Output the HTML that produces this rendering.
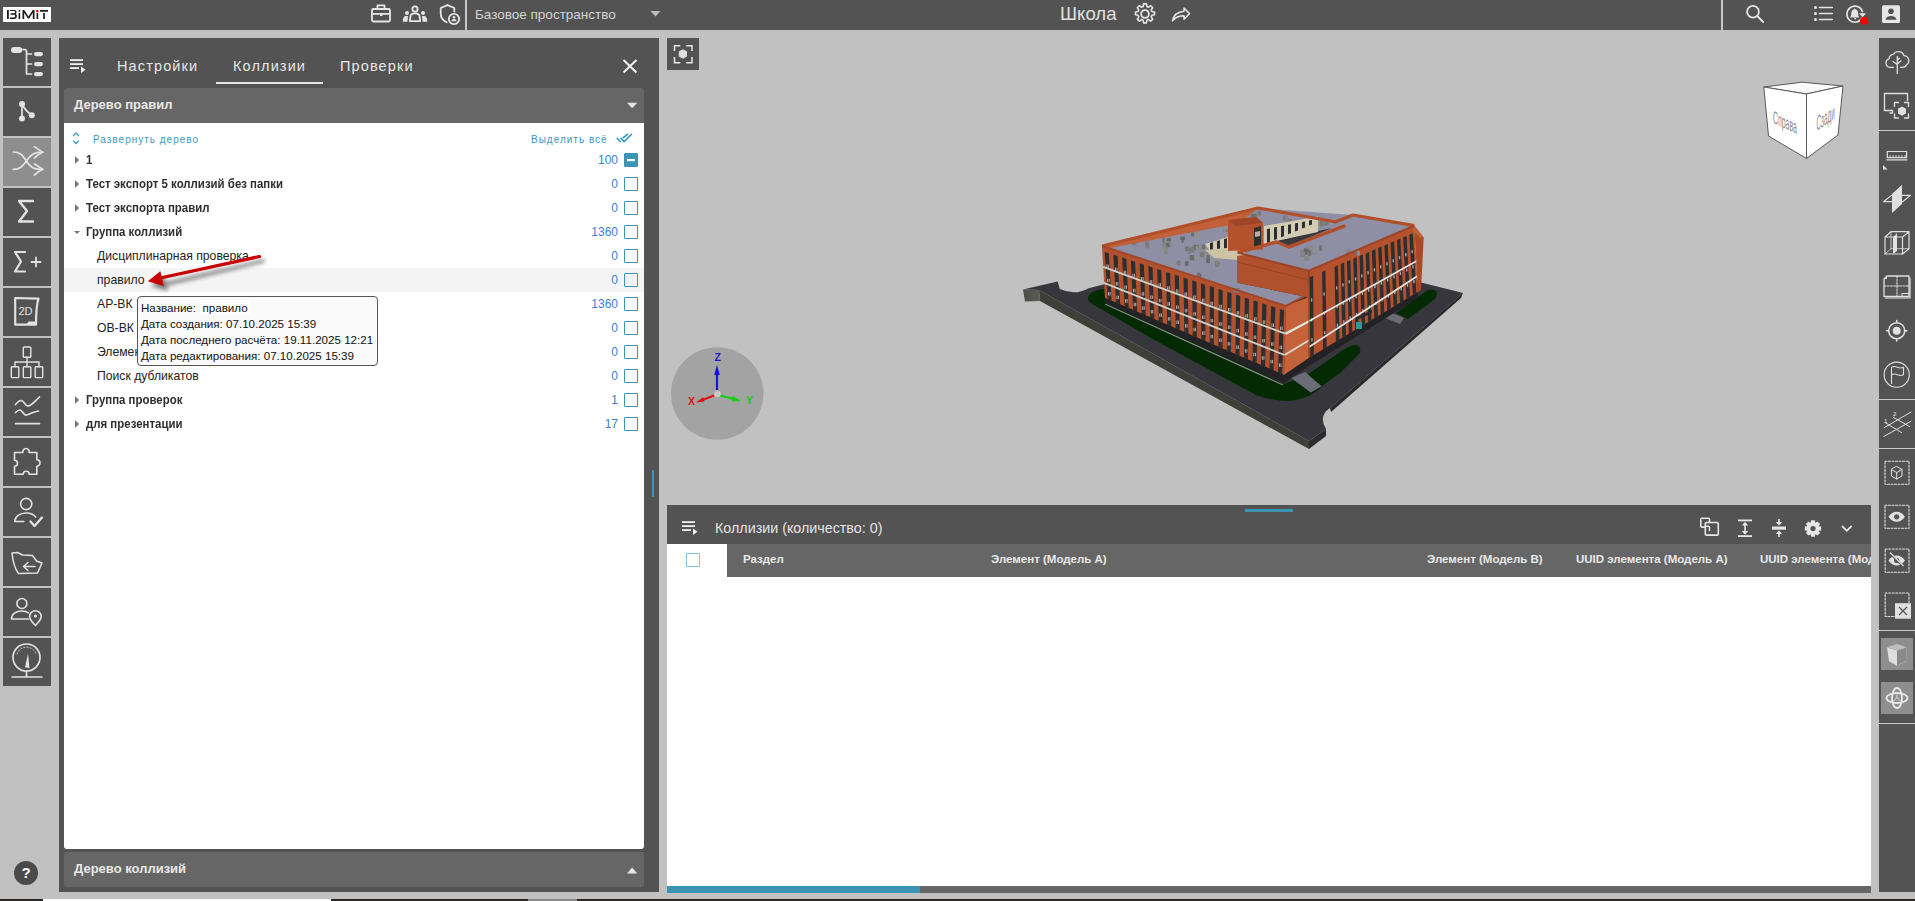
<!DOCTYPE html>
<html><head><meta charset="utf-8">
<style>
*{box-sizing:border-box;margin:0;padding:0}
html,body{width:1915px;height:901px;overflow:hidden;background:#c1c1c1;font-family:"Liberation Sans",sans-serif;position:relative}
.a{position:absolute}
.dk{background:#535353}
svg{position:absolute;overflow:visible}
.tile{position:absolute;left:3px;width:48px;height:48px;background:#535353}
.tile.on{background:#8e8e8e}
.row{position:absolute;left:64px;width:580px;height:24px;font-size:12px;color:#222}
.row .t{position:absolute;top:5px;white-space:nowrap}
.row .n{position:absolute;right:26px;top:5px;color:#3b7fd6;font-size:12px}
.row .cb{position:absolute;left:560px;top:5px;width:14px;height:14px;border:1.5px solid #3d93b3;border-radius:1px}
.b{font-weight:bold}
.row .t{font-size:12.2px}
.row .t.b{font-size:12.3px;color:#2e2e2e;top:4.5px;transform:scaleX(0.93);transform-origin:0 0}
.tri{position:absolute;left:11px;top:8px;width:0;height:0;border-top:4px solid transparent;border-bottom:4px solid transparent;border-left:4px solid #777}
.trid{position:absolute;left:10px;top:10.5px;width:0;height:0;border-left:3.5px solid transparent;border-right:3.5px solid transparent;border-top:3.5px solid #777}
.rt{position:absolute;left:1879px;width:36px}
.sep{position:absolute;left:1879px;width:36px;height:1px;background:#c8c8c8}
</style></head><body>

<!-- TOP BAR -->
<div class="a dk" style="left:0;top:0;width:1915px;height:30px"></div>
<div class="a" style="left:3px;top:7px;width:48px;height:15px;background:#fff"></div>
<div class="a" style="left:465px;top:0;width:2px;height:30px;background:#c8c8c8"></div>
<div class="a" style="left:475px;top:7px;font-size:13.5px;color:#d4d4d4;white-space:nowrap">Базовое пространство</div>
<div class="a" style="left:1721px;top:0;width:2px;height:30px;background:#c8c8c8"></div>
<div class="a" style="left:1060px;top:3px;font-size:18.6px;color:#e0e0e0;white-space:nowrap">Школа</div>

<!-- LEFT SIDEBAR TILES -->
<div class="tile" style="top:38px"></div>
<div class="tile" style="top:88px"></div>
<div class="tile on" style="top:138px"></div>
<div class="tile" style="top:188px"></div>
<div class="tile" style="top:238px"></div>
<div class="tile" style="top:288px"></div>
<div class="tile" style="top:338px"></div>
<div class="tile" style="top:388px"></div>
<div class="tile" style="top:438px"></div>
<div class="tile" style="top:488px"></div>
<div class="tile" style="top:538px"></div>
<div class="tile" style="top:588px"></div>
<div class="tile" style="top:638px"></div>
<div class="a" style="left:14px;top:861px;width:24px;height:24px;border-radius:12px;background:#4a4a4a;color:#fff;font-weight:bold;font-size:15px;text-align:center;line-height:24px">?</div>

<!-- LEFT PANEL -->
<div class="a dk" style="left:59px;top:38px;width:600px;height:854px"></div>
<div class="a" style="left:117px;top:58px;font-size:14.5px;color:#e6e6e6;letter-spacing:1.13px;white-space:nowrap">Настройки</div>
<div class="a" style="left:233px;top:58px;font-size:14.5px;color:#e6e6e6;letter-spacing:1.13px;white-space:nowrap">Коллизии</div>
<div class="a" style="left:340px;top:58px;font-size:14.5px;color:#e6e6e6;letter-spacing:1.13px;white-space:nowrap">Проверки</div>
<div class="a" style="left:216px;top:82px;width:107px;height:2px;background:#e6e6e6"></div>
<div class="a" style="left:64px;top:88px;width:580px;height:35px;background:#666;border-radius:3px 3px 0 0"></div>
<div class="a b" style="left:74px;top:97px;font-size:13px;color:#e8e8e8;white-space:nowrap">Дерево правил</div>
<div class="a" style="left:64px;top:123px;width:580px;height:726px;background:#fff;border-radius:0 0 3px 3px"></div>
<div class="a" style="left:64px;top:852px;width:580px;height:35px;background:#666;border-radius:3px"></div>
<div class="a b" style="left:74px;top:861px;font-size:13px;color:#e8e8e8;white-space:nowrap">Дерево коллизий</div>

<div class="a" style="left:93px;top:133.5px;font-size:10px;color:#3e98c0;letter-spacing:1px;white-space:nowrap">Развернуть дерево</div>
<div class="a" style="left:531px;top:133.5px;font-size:10px;color:#3e98c0;letter-spacing:1px;white-space:nowrap">Выделить всё</div>

<div class="row" style="top:148px"><div class="tri"></div><div class="t b" style="left:22px">1</div><div class="n">100</div><div class="cb" style="background:#3d93b3"></div></div>
<div class="row" style="top:172px"><div class="tri"></div><div class="t b" style="left:22px">Тест экспорт 5 коллизий без папки</div><div class="n">0</div><div class="cb"></div></div>
<div class="row" style="top:196px"><div class="tri"></div><div class="t b" style="left:22px">Тест экспорта правил</div><div class="n">0</div><div class="cb"></div></div>
<div class="row" style="top:220px"><div class="trid"></div><div class="t b" style="left:22px">Группа коллизий</div><div class="n">1360</div><div class="cb"></div></div>
<div class="row" style="top:244px"><div class="t" style="left:33px">Дисциплинарная проверка</div><div class="n">0</div><div class="cb"></div></div>
<div class="row" style="top:268px;background:#f4f4f4"><div class="t" style="left:33px">правило</div><div class="n">0</div><div class="cb"></div></div>
<div class="row" style="top:292px"><div class="t" style="left:33px">АР-ВК</div><div class="n">1360</div><div class="cb"></div></div>
<div class="row" style="top:316px"><div class="t" style="left:33px">ОВ-ВК</div><div class="n">0</div><div class="cb"></div></div>
<div class="row" style="top:340px"><div class="t" style="left:33px">Элементы</div><div class="n">0</div><div class="cb"></div></div>
<div class="row" style="top:364px"><div class="t" style="left:33px">Поиск дубликатов</div><div class="n">0</div><div class="cb"></div></div>
<div class="row" style="top:388px"><div class="tri"></div><div class="t b" style="left:22px">Группа проверок</div><div class="n">1</div><div class="cb"></div></div>
<div class="row" style="top:412px"><div class="tri"></div><div class="t b" style="left:22px">для презентации</div><div class="n">17</div><div class="cb"></div></div>

<!-- tooltip -->
<div class="a" style="left:137px;top:296px;width:241px;height:70px;background:#fafafa;border:1px solid #555;border-radius:4px;font-size:11.6px;color:#111;padding:3px 0 0 3px;line-height:16px;white-space:nowrap">Название:&nbsp; <span style="background:#fff;padding:0 2px;margin-left:-2px">правило</span><br>Дата создания: 07.10.2025 15:39<br>Дата последнего расчёта: 19.11.2025 12:21<br>Дата редактирования: 07.10.2025 15:39</div>

<!-- VIEWER -->
<div class="a dk" style="left:667px;top:38px;width:32px;height:32px"></div>

<!-- BOTTOM PANEL -->
<div class="a dk" style="left:667px;top:505px;width:1204px;height:39px"></div>
<div class="a" style="left:715px;top:520px;font-size:14.3px;color:#e4e4e4;white-space:nowrap">Коллизии (количество: 0)</div>
<div class="a" style="left:667px;top:544px;width:1204px;height:342px;background:#fff"></div>
<div class="a" style="left:727px;top:544px;width:1144px;height:33px;background:#666"></div>
<div class="a" style="left:686px;top:553px;width:14px;height:14px;border:1.5px solid #7fc0da;border-radius:1px"></div>
<div class="a b" style="left:743px;top:553px;font-size:11.5px;color:#e8e8e8;white-space:nowrap">Раздел</div>
<div class="a b" style="left:991px;top:553px;font-size:11.5px;color:#e8e8e8;white-space:nowrap">Элемент (Модель А)</div>
<div class="a b" style="left:1427px;top:553px;font-size:11.5px;color:#e8e8e8;white-space:nowrap">Элемент (Модель В)</div>
<div class="a b" style="left:1576px;top:553px;font-size:11.5px;color:#e8e8e8;white-space:nowrap">UUID элемента (Модель А)</div>
<div class="a" style="left:1760px;top:544px;width:111px;height:33px;overflow:hidden"><div class="a b" style="left:0;top:9px;font-size:11.5px;color:#e8e8e8;white-space:nowrap">UUID элемента (Модель В)</div></div>
<div class="a" style="left:667px;top:886px;width:1204px;height:7px;background:#666"></div>
<div class="a" style="left:667px;top:886px;width:253px;height:7px;background:#3a93b0"></div>

<!-- RIGHT TOOLBAR -->
<div class="a dk" style="left:1879px;top:38px;width:36px;height:854px"></div>
<div class="sep" style="top:130px"></div>
<div class="sep" style="top:399px"></div>
<div class="sep" style="top:448px"></div>
<div class="sep" style="top:630px"></div>
<div class="sep" style="top:723px"></div>
<div class="a" style="left:1881px;top:638px;width:32px;height:32px;background:#8e8e8e"></div>
<div class="a" style="left:1881px;top:682px;width:32px;height:32px;background:#8e8e8e"></div>


<!-- ICON OVERLAY -->
<svg class="a" style="left:0;top:0" width="1915" height="901" viewBox="0 0 1915 901">
<g id="logo">
 <g fill="#1a1a1a">
  <rect x="7" y="10" width="1.8" height="9"/>
  <path d="M10 10h4.2c1.6 0 2.4 0.9 2.4 2.2c0 0.8-0.4 1.5-1.1 1.8c0.9 0.3 1.4 1 1.4 2c0 1.6-1 3-2.7 3H10v-1.6h4c0.8 0 1.2-0.6 1.2-1.3c0-0.7-0.4-1.3-1.2-1.3H10.6v-1.5h3.4c0.7 0 1.1-0.5 1.1-1.1c0-0.6-0.4-1.1-1.1-1.1H10z"/>
  <rect x="18.6" y="10" width="1.6" height="1.6"/>
  <rect x="18.6" y="13" width="1.6" height="6"/>
  <path d="M22.5 10h1.8l4.2 6.5l4.2-6.5h1.8v9h-1.7v-6.2l-3.7 5.6h-1.2l-3.7-5.6v6.2h-1.7z"/>
  <rect x="36.6" y="13" width="1.6" height="6"/>
  <rect x="40" y="10" width="8" height="1.7"/>
  <rect x="43.2" y="13" width="1.7" height="6"/>
 </g>
 <rect x="36.2" y="10" width="2.2" height="2.2" fill="#f00"/>
</g>
<g fill="none" stroke="#e6e6e6" stroke-width="1.8" stroke-linecap="round" stroke-linejoin="round">
 <!-- briefcase -->
 <rect x="372" y="9" width="18" height="12.5" rx="1.5"/>
 <path d="M377.5 8.5v-3.2h7v3.2"/>
 <path d="M372 13.8h18"/>
 <rect x="380" y="13.8" width="2.5" height="2.2" fill="#e6e6e6" stroke="none"/>
 <!-- people -->
 <circle cx="415" cy="9" r="2.6"/>
 <path d="M409.8 21.2l0.8-5.5c0.3-1.6 1.8-2.4 4.4-2.4s4.1 0.8 4.4 2.4l0.8 5.5z"/>
 <!-- shield -->
 <path d="M447.5 5.2l-6.8 2.8v5.5c0 4 2.4 7.2 6 8.8"/>
 <path d="M447.5 5.2l6.8 2.8v3.6"/>
 <circle cx="454" cy="19" r="5.2"/>
 <!-- gear -->
 <circle cx="1145" cy="14" r="3.9"/>
 <!-- share -->
 <path d="M1184 8l5.5 5.6l-5.5 5.6v-3.4c-5 0-8.5 1.4-11.5 5c1-5 4-8.8 11.5-9.5z" stroke-width="1.5"/>
 <!-- search -->
 <circle cx="1753" cy="11.7" r="5.9"/>
 <path d="M1757.3 16l5.8 6"/>
 <!-- list -->
 <path d="M1819.5 7.5h12.8M1819.5 13.5h12.8M1819.5 19.5h12.8" stroke-width="1.5"/>
 <!-- bell ring -->
 <path d="M1862.5 11.5a8 8 0 1 0 -0.5 6.5" stroke-width="1.6"/>
</g>
<g fill="#e6e6e6">
 <circle cx="407" cy="13" r="2"/>
 <circle cx="423" cy="13" r="2"/>
 <path d="M402.8 21.8c0-3.5 0.8-5.5 2.8-5.9h2.4l-0.6 5.9z"/>
 <path d="M427.2 21.8c0-3.5-0.8-5.5-2.8-5.9h-2.4l0.6 5.9z"/>
 <circle cx="454" cy="17.2" r="1.3"/>
 <path d="M451.3 21.2c0.3-1.6 1.3-2.3 2.7-2.3s2.4 0.7 2.7 2.3z"/>
 <path d="M1143.6 3.9h2.8l0.5 2.6l1.6 0.7l2.2-1.5l2 2l-1.5 2.2l0.7 1.6l2.6 0.5v2.8l-2.6 0.5l-0.7 1.6l1.5 2.2l-2 2l-2.2-1.5l-1.6 0.7l-0.5 2.6h-2.8l-0.5-2.6l-1.6-0.7l-2.2 1.5l-2-2l1.5-2.2l-0.7-1.6l-2.6-0.5v-2.8l2.6-0.5l0.7-1.6l-1.5-2.2l2-2l2.2 1.5l1.6-0.7z" fill="none" stroke="#e6e6e6" stroke-width="1.6" stroke-linejoin="round"/>
 <circle cx="1815.5" cy="7.5" r="1.5"/><circle cx="1815.5" cy="13.5" r="1.5"/><circle cx="1815.5" cy="19.5" r="1.5"/>
 <path d="M1859 13.2h7l-3.5 4z"/>
 <path d="M1851 17.5h8.5c-1-1-1.3-2-1.3-3.6c0-2.3-1-4.2-3-4.6v-0.8h-1v0.8c-2 0.4-3 2.3-3 4.6c0 1.6-0.3 2.6-1.3 3.6z"/>
 <circle cx="1855.2" cy="18.6" r="0.9"/>
 <rect x="1882" y="5.2" width="18" height="17.8" rx="1.5"/>
</g>
<circle cx="1864" cy="20.7" r="4" fill="#f00"/>

<!-- BUILDING -->
<g id="bld"><path d="M1023,289.5 L1057.6,281.5 L1059.8,289.1 Q1075,296 1088.7,288.2 L1106.4,283.8 L1260,240 L1423,283 L1463,293 L1330,408 Q1318,416 1326,429 L1309,441 L1039,290 Z" fill="#37363c"/>
<defs><linearGradient id="endg" x1="0" x2="1" y1="0" y2="0"><stop offset="0" stop-color="#4a4a4a"/><stop offset="1" stop-color="#5e5e58"/></linearGradient></defs>
<polygon points="1023.0,289.5 1039.0,290.0 1040.0,301.0 1025.0,301.5" fill="url(#endg)" />
<polygon points="1039.0,290.0 1309.0,441.0 1309.0,449.0 1040.0,301.0" fill="#3f3f3a" />
<polygon points="1326.0,429.0 1326.0,436.0 1309.0,449.0 1309.0,441.0" fill="#2c2c2e" />
<polygon points="1463.0,293.0 1461.0,298.0 1331.0,412.0 1330.0,408.0" fill="#2a2a2c" />
<path d="M1106,289 L1283,384 L1306,376 L1322,386 Q1312,398 1290,401 Q1272,401 1256,395 L1150,337.5 L1095,305.5 Q1084,300 1090,294 Q1096,289 1106,289 Z" fill="#032a03"/>
<path d="M1306,375.5 L1346,348 Q1362,340 1360,353 L1340,373 L1322,386 Z" fill="#032a03"/>
<path d="M1396,313 L1428,290 Q1441,288 1435,299 L1408,319 Z" fill="#032a03"/>
<polygon points="1291.0,378.0 1305.0,372.0 1321.5,386.2 1310.8,392.4" fill="#6c6c78" />
<polygon points="1385.0,318.0 1400.0,324.0 1404.0,318.0 1392.0,313.0" fill="#6c6c74" />
<line x1="1105" y1="304" x2="1283" y2="385" stroke="#8a8a8a" stroke-width="1.2"/>
<polygon points="1102.0,246.0 1286.0,306.0 1284.0,375.0 1105.0,298.0" fill="#b3512e" />
<polygon points="1105.0,298.0 1284.0,375.0 1284.0,383.0 1105.0,303.0" fill="#232325" />
<polygon points="1104.6,251.9 1108.8,253.2 1111.6,300.9 1107.6,299.1" fill="#2c2e30" />
<rect x="1106.3" y="264.6" width="2.5" height="3.4" fill="#b9b2b4"/>
<rect x="1107.3" y="264.6" width="0.6" height="3.4" fill="#2c2e30"/>
<rect x="1107.2" y="278.8" width="2.5" height="3.4" fill="#b9b2b4"/>
<rect x="1108.2" y="278.8" width="0.6" height="3.4" fill="#2c2e30"/>
<rect x="1108.0" y="292.1" width="2.5" height="3.4" fill="#b9b2b4"/>
<rect x="1109.0" y="292.1" width="0.6" height="3.4" fill="#2c2e30"/>
<polygon points="1113.4,254.7 1117.6,256.1 1120.2,304.5 1116.1,302.8" fill="#2c2e30" />
<rect x="1115.0" y="267.7" width="2.5" height="3.4" fill="#b9b2b4"/>
<rect x="1116.0" y="267.7" width="0.6" height="3.4" fill="#2c2e30"/>
<rect x="1115.8" y="282.1" width="2.5" height="3.4" fill="#b9b2b4"/>
<rect x="1116.8" y="282.1" width="0.6" height="3.4" fill="#2c2e30"/>
<rect x="1116.5" y="295.7" width="2.5" height="3.4" fill="#b9b2b4"/>
<rect x="1117.5" y="295.7" width="0.6" height="3.4" fill="#2c2e30"/>
<polygon points="1122.2,257.6 1126.4,258.9 1128.7,308.2 1124.6,306.4" fill="#2c2e30" />
<rect x="1123.7" y="270.8" width="2.5" height="3.4" fill="#b9b2b4"/>
<rect x="1124.7" y="270.8" width="0.6" height="3.4" fill="#2c2e30"/>
<rect x="1124.4" y="285.5" width="2.5" height="3.4" fill="#b9b2b4"/>
<rect x="1125.4" y="285.5" width="0.6" height="3.4" fill="#2c2e30"/>
<rect x="1125.1" y="299.2" width="2.5" height="3.4" fill="#b9b2b4"/>
<rect x="1126.1" y="299.2" width="0.6" height="3.4" fill="#2c2e30"/>
<polygon points="1130.9,260.4 1135.1,261.8 1137.2,311.9 1133.1,310.1" fill="#2c2e30" />
<rect x="1132.4" y="273.9" width="2.5" height="3.4" fill="#b9b2b4"/>
<rect x="1133.4" y="273.9" width="0.6" height="3.4" fill="#2c2e30"/>
<rect x="1133.0" y="288.8" width="2.5" height="3.4" fill="#b9b2b4"/>
<rect x="1134.0" y="288.8" width="0.6" height="3.4" fill="#2c2e30"/>
<rect x="1133.7" y="302.8" width="2.5" height="3.4" fill="#b9b2b4"/>
<rect x="1134.6" y="302.8" width="0.6" height="3.4" fill="#2c2e30"/>
<polygon points="1139.7,263.3 1143.9,264.7 1145.7,315.5 1141.7,313.8" fill="#2c2e30" />
<rect x="1141.1" y="277.0" width="2.5" height="3.4" fill="#b9b2b4"/>
<rect x="1142.1" y="277.0" width="0.6" height="3.4" fill="#2c2e30"/>
<rect x="1141.7" y="292.2" width="2.5" height="3.4" fill="#b9b2b4"/>
<rect x="1142.6" y="292.2" width="0.6" height="3.4" fill="#2c2e30"/>
<rect x="1142.2" y="306.4" width="2.5" height="3.4" fill="#b9b2b4"/>
<rect x="1143.2" y="306.4" width="0.6" height="3.4" fill="#2c2e30"/>
<polygon points="1148.4,266.1 1152.6,267.5 1154.3,319.2 1150.2,317.4" fill="#2c2e30" />
<rect x="1149.8" y="280.1" width="2.5" height="3.4" fill="#b9b2b4"/>
<rect x="1150.7" y="280.1" width="0.6" height="3.4" fill="#2c2e30"/>
<rect x="1150.3" y="295.5" width="2.5" height="3.4" fill="#b9b2b4"/>
<rect x="1151.2" y="295.5" width="0.6" height="3.4" fill="#2c2e30"/>
<rect x="1150.8" y="309.9" width="2.5" height="3.4" fill="#b9b2b4"/>
<rect x="1151.7" y="309.9" width="0.6" height="3.4" fill="#2c2e30"/>
<polygon points="1157.2,269.0 1161.4,270.4 1162.8,322.9 1158.7,321.1" fill="#2c2e30" />
<rect x="1158.5" y="283.2" width="2.5" height="3.4" fill="#b9b2b4"/>
<rect x="1159.4" y="283.2" width="0.6" height="3.4" fill="#2c2e30"/>
<rect x="1158.9" y="298.9" width="2.5" height="3.4" fill="#b9b2b4"/>
<rect x="1159.9" y="298.9" width="0.6" height="3.4" fill="#2c2e30"/>
<rect x="1159.3" y="313.5" width="2.5" height="3.4" fill="#b9b2b4"/>
<rect x="1160.3" y="313.5" width="0.6" height="3.4" fill="#2c2e30"/>
<polygon points="1166.0,271.9 1170.2,273.2 1171.3,326.5 1167.2,324.8" fill="#2c2e30" />
<rect x="1167.2" y="286.3" width="2.5" height="3.4" fill="#b9b2b4"/>
<rect x="1168.1" y="286.3" width="0.6" height="3.4" fill="#2c2e30"/>
<rect x="1167.5" y="302.2" width="2.5" height="3.4" fill="#b9b2b4"/>
<rect x="1168.5" y="302.2" width="0.6" height="3.4" fill="#2c2e30"/>
<rect x="1167.9" y="317.1" width="2.5" height="3.4" fill="#b9b2b4"/>
<rect x="1168.8" y="317.1" width="0.6" height="3.4" fill="#2c2e30"/>
<polygon points="1174.7,274.7 1178.9,276.1 1179.8,330.2 1175.7,328.4" fill="#2c2e30" />
<rect x="1175.9" y="289.4" width="2.5" height="3.4" fill="#b9b2b4"/>
<rect x="1176.8" y="289.4" width="0.6" height="3.4" fill="#2c2e30"/>
<rect x="1176.1" y="305.5" width="2.5" height="3.4" fill="#b9b2b4"/>
<rect x="1177.1" y="305.5" width="0.6" height="3.4" fill="#2c2e30"/>
<rect x="1176.4" y="320.6" width="2.5" height="3.4" fill="#b9b2b4"/>
<rect x="1177.4" y="320.6" width="0.6" height="3.4" fill="#2c2e30"/>
<polygon points="1183.5,277.6 1187.7,278.9 1188.4,333.9 1184.3,332.1" fill="#2c2e30" />
<rect x="1184.5" y="292.5" width="2.5" height="3.4" fill="#b9b2b4"/>
<rect x="1185.5" y="292.5" width="0.6" height="3.4" fill="#2c2e30"/>
<rect x="1184.8" y="308.9" width="2.5" height="3.4" fill="#b9b2b4"/>
<rect x="1185.7" y="308.9" width="0.6" height="3.4" fill="#2c2e30"/>
<rect x="1185.0" y="324.2" width="2.5" height="3.4" fill="#b9b2b4"/>
<rect x="1185.9" y="324.2" width="0.6" height="3.4" fill="#2c2e30"/>
<polygon points="1192.2,280.4 1196.5,281.8 1196.9,337.5 1192.8,335.8" fill="#2c2e30" />
<rect x="1193.2" y="295.6" width="2.5" height="3.4" fill="#b9b2b4"/>
<rect x="1194.2" y="295.6" width="0.6" height="3.4" fill="#2c2e30"/>
<rect x="1193.4" y="312.2" width="2.5" height="3.4" fill="#b9b2b4"/>
<rect x="1194.3" y="312.2" width="0.6" height="3.4" fill="#2c2e30"/>
<rect x="1193.5" y="327.8" width="2.5" height="3.4" fill="#b9b2b4"/>
<rect x="1194.5" y="327.8" width="0.6" height="3.4" fill="#2c2e30"/>
<polygon points="1201.0,283.3 1205.2,284.7 1205.4,341.2 1201.3,339.4" fill="#2c2e30" />
<rect x="1201.9" y="298.7" width="2.5" height="3.4" fill="#b9b2b4"/>
<rect x="1202.9" y="298.7" width="0.6" height="3.4" fill="#2c2e30"/>
<rect x="1202.0" y="315.6" width="2.5" height="3.4" fill="#b9b2b4"/>
<rect x="1203.0" y="315.6" width="0.6" height="3.4" fill="#2c2e30"/>
<rect x="1202.1" y="331.4" width="2.5" height="3.4" fill="#b9b2b4"/>
<rect x="1203.0" y="331.4" width="0.6" height="3.4" fill="#2c2e30"/>
<polygon points="1209.8,286.1 1214.0,287.5 1213.9,344.9 1209.8,343.1" fill="#2c2e30" />
<rect x="1210.6" y="301.8" width="2.5" height="3.4" fill="#b9b2b4"/>
<rect x="1211.6" y="301.8" width="0.6" height="3.4" fill="#2c2e30"/>
<rect x="1210.6" y="318.9" width="2.5" height="3.4" fill="#b9b2b4"/>
<rect x="1211.6" y="318.9" width="0.6" height="3.4" fill="#2c2e30"/>
<rect x="1210.6" y="334.9" width="2.5" height="3.4" fill="#b9b2b4"/>
<rect x="1211.6" y="334.9" width="0.6" height="3.4" fill="#2c2e30"/>
<polygon points="1218.5,289.0 1222.7,290.4 1222.5,348.5 1218.4,346.8" fill="#2c2e30" />
<rect x="1219.3" y="304.9" width="2.5" height="3.4" fill="#b9b2b4"/>
<rect x="1220.3" y="304.9" width="0.6" height="3.4" fill="#2c2e30"/>
<rect x="1219.2" y="322.3" width="2.5" height="3.4" fill="#b9b2b4"/>
<rect x="1220.2" y="322.3" width="0.6" height="3.4" fill="#2c2e30"/>
<rect x="1219.2" y="338.5" width="2.5" height="3.4" fill="#b9b2b4"/>
<rect x="1220.1" y="338.5" width="0.6" height="3.4" fill="#2c2e30"/>
<polygon points="1227.3,291.9 1231.5,293.2 1231.0,352.2 1226.9,350.4" fill="#2c2e30" />
<rect x="1228.0" y="308.0" width="2.5" height="3.4" fill="#b9b2b4"/>
<rect x="1229.0" y="308.0" width="0.6" height="3.4" fill="#2c2e30"/>
<rect x="1227.9" y="325.6" width="2.5" height="3.4" fill="#b9b2b4"/>
<rect x="1228.8" y="325.6" width="0.6" height="3.4" fill="#2c2e30"/>
<rect x="1227.7" y="342.1" width="2.5" height="3.4" fill="#b9b2b4"/>
<rect x="1228.7" y="342.1" width="0.6" height="3.4" fill="#2c2e30"/>
<polygon points="1236.1,294.7 1240.3,296.1 1239.5,355.9 1235.4,354.1" fill="#2c2e30" />
<rect x="1236.7" y="311.1" width="2.5" height="3.4" fill="#b9b2b4"/>
<rect x="1237.7" y="311.1" width="0.6" height="3.4" fill="#2c2e30"/>
<rect x="1236.5" y="328.9" width="2.5" height="3.4" fill="#b9b2b4"/>
<rect x="1237.4" y="328.9" width="0.6" height="3.4" fill="#2c2e30"/>
<rect x="1236.3" y="345.6" width="2.5" height="3.4" fill="#b9b2b4"/>
<rect x="1237.2" y="345.6" width="0.6" height="3.4" fill="#2c2e30"/>
<polygon points="1244.8,297.6 1249.0,298.9 1248.0,359.5 1243.9,357.8" fill="#2c2e30" />
<rect x="1245.4" y="314.2" width="2.5" height="3.4" fill="#b9b2b4"/>
<rect x="1246.3" y="314.2" width="0.6" height="3.4" fill="#2c2e30"/>
<rect x="1245.1" y="332.3" width="2.5" height="3.4" fill="#b9b2b4"/>
<rect x="1246.1" y="332.3" width="0.6" height="3.4" fill="#2c2e30"/>
<rect x="1244.8" y="349.2" width="2.5" height="3.4" fill="#b9b2b4"/>
<rect x="1245.8" y="349.2" width="0.6" height="3.4" fill="#2c2e30"/>
<polygon points="1253.6,300.4 1257.8,301.8 1256.6,363.2 1252.5,361.4" fill="#2c2e30" />
<rect x="1254.1" y="317.3" width="2.5" height="3.4" fill="#b9b2b4"/>
<rect x="1255.0" y="317.3" width="0.6" height="3.4" fill="#2c2e30"/>
<rect x="1253.7" y="335.6" width="2.5" height="3.4" fill="#b9b2b4"/>
<rect x="1254.7" y="335.6" width="0.6" height="3.4" fill="#2c2e30"/>
<rect x="1253.4" y="352.8" width="2.5" height="3.4" fill="#b9b2b4"/>
<rect x="1254.3" y="352.8" width="0.6" height="3.4" fill="#2c2e30"/>
<polygon points="1262.3,303.3 1266.5,304.7 1265.1,366.9 1261.0,365.1" fill="#2c2e30" />
<rect x="1262.8" y="320.4" width="2.5" height="3.4" fill="#b9b2b4"/>
<rect x="1263.7" y="320.4" width="0.6" height="3.4" fill="#2c2e30"/>
<rect x="1262.3" y="339.0" width="2.5" height="3.4" fill="#b9b2b4"/>
<rect x="1263.3" y="339.0" width="0.6" height="3.4" fill="#2c2e30"/>
<rect x="1261.9" y="356.3" width="2.5" height="3.4" fill="#b9b2b4"/>
<rect x="1262.9" y="356.3" width="0.6" height="3.4" fill="#2c2e30"/>
<polygon points="1271.1,306.1 1275.3,307.5 1273.6,370.5 1269.5,368.8" fill="#2c2e30" />
<rect x="1271.5" y="323.5" width="2.5" height="3.4" fill="#b9b2b4"/>
<rect x="1272.4" y="323.5" width="0.6" height="3.4" fill="#2c2e30"/>
<rect x="1271.0" y="342.3" width="2.5" height="3.4" fill="#b9b2b4"/>
<rect x="1271.9" y="342.3" width="0.6" height="3.4" fill="#2c2e30"/>
<rect x="1270.5" y="359.9" width="2.5" height="3.4" fill="#b9b2b4"/>
<rect x="1271.5" y="359.9" width="0.6" height="3.4" fill="#2c2e30"/>
<polygon points="1279.9,309.0 1284.1,310.4 1282.1,374.2 1278.0,372.4" fill="#2c2e30" />
<rect x="1280.1" y="326.6" width="2.5" height="3.4" fill="#b9b2b4"/>
<rect x="1281.1" y="326.6" width="0.6" height="3.4" fill="#2c2e30"/>
<rect x="1279.6" y="345.7" width="2.5" height="3.4" fill="#b9b2b4"/>
<rect x="1280.5" y="345.7" width="0.6" height="3.4" fill="#2c2e30"/>
<rect x="1279.0" y="363.5" width="2.5" height="3.4" fill="#b9b2b4"/>
<rect x="1280.0" y="363.5" width="0.6" height="3.4" fill="#2c2e30"/>
<line x1="1103.2" y1="266.8" x2="1285.2" y2="333.6" stroke="#cfd0c8" stroke-width="1.8"/>
<line x1="1104.1" y1="282.9" x2="1284.6" y2="355.0" stroke="#cfd0c8" stroke-width="1.8"/>
<polygon points="1286.0,306.0 1309.0,297.0 1309.0,358.0 1284.0,375.0" fill="#c4623a" />
<polygon points="1284.0,375.0 1309.0,358.0 1309.0,366.0 1284.0,383.0" fill="#232325" />
<line x1="1285.2" y1="333.6" x2="1309.0" y2="321.4" stroke="#dcdcd4" stroke-width="1.8"/>
<line x1="1284.6" y1="355.0" x2="1309.0" y2="340.3" stroke="#dcdcd4" stroke-width="1.8"/>
<polygon points="1308.4,270.8 1414.3,225.7 1418.0,292.0 1309.0,358.0" fill="#b5512d" />
<polygon points="1309.0,358.0 1418.0,292.0 1418.0,298.0 1309.0,366.0" fill="#232325" />
<polygon points="1309.6,277.3 1313.1,275.8 1313.8,355.1 1310.3,357.2" fill="#2c2e30" />
<rect x="1310.9" y="298.4" width="1.4" height="3.2" fill="#a8a4a8"/>
<rect x="1311.0" y="318.3" width="1.4" height="3.2" fill="#a8a4a8"/>
<rect x="1311.2" y="338.2" width="1.4" height="3.2" fill="#a8a4a8"/>
<polygon points="1322.1,272.0 1325.5,270.5 1326.6,347.3 1323.1,349.5" fill="#2c2e30" />
<rect x="1323.4" y="292.4" width="1.4" height="3.2" fill="#a8a4a8"/>
<rect x="1323.7" y="311.7" width="1.4" height="3.2" fill="#a8a4a8"/>
<rect x="1324.0" y="331.0" width="1.4" height="3.2" fill="#a8a4a8"/>
<polygon points="1334.6,266.7 1338.0,265.2 1339.5,339.6 1335.9,341.7" fill="#2c2e30" />
<rect x="1336.0" y="286.3" width="1.4" height="3.2" fill="#a8a4a8"/>
<rect x="1336.4" y="305.0" width="1.4" height="3.2" fill="#a8a4a8"/>
<rect x="1336.7" y="323.7" width="1.4" height="3.2" fill="#a8a4a8"/>
<polygon points="1340.8,264.0 1344.2,262.5 1345.9,335.7 1342.3,337.8" fill="#2c2e30" />
<rect x="1342.3" y="283.3" width="1.4" height="3.2" fill="#a8a4a8"/>
<rect x="1342.7" y="301.7" width="1.4" height="3.2" fill="#a8a4a8"/>
<rect x="1343.1" y="320.1" width="1.4" height="3.2" fill="#a8a4a8"/>
<polygon points="1347.0,261.4 1350.4,259.9 1352.3,331.8 1348.8,333.9" fill="#2c2e30" />
<rect x="1348.6" y="280.3" width="1.4" height="3.2" fill="#a8a4a8"/>
<rect x="1349.0" y="298.4" width="1.4" height="3.2" fill="#a8a4a8"/>
<rect x="1349.5" y="316.4" width="1.4" height="3.2" fill="#a8a4a8"/>
<polygon points="1353.3,258.7 1356.7,257.2 1358.7,327.9 1355.2,330.0" fill="#2c2e30" />
<rect x="1354.9" y="277.3" width="1.4" height="3.2" fill="#a8a4a8"/>
<rect x="1355.3" y="295.0" width="1.4" height="3.2" fill="#a8a4a8"/>
<rect x="1355.8" y="312.8" width="1.4" height="3.2" fill="#a8a4a8"/>
<polygon points="1359.5,256.0 1362.9,254.6 1365.1,324.0 1361.6,326.2" fill="#2c2e30" />
<rect x="1361.1" y="274.3" width="1.4" height="3.2" fill="#a8a4a8"/>
<rect x="1361.7" y="291.7" width="1.4" height="3.2" fill="#a8a4a8"/>
<rect x="1362.2" y="309.1" width="1.4" height="3.2" fill="#a8a4a8"/>
<polygon points="1365.7,253.4 1369.1,251.9 1371.5,320.1 1368.0,322.3" fill="#2c2e30" />
<rect x="1367.4" y="271.2" width="1.4" height="3.2" fill="#a8a4a8"/>
<rect x="1368.0" y="288.4" width="1.4" height="3.2" fill="#a8a4a8"/>
<rect x="1368.6" y="305.5" width="1.4" height="3.2" fill="#a8a4a8"/>
<polygon points="1371.9,250.7 1375.4,249.3 1377.9,316.3 1374.4,318.4" fill="#2c2e30" />
<rect x="1373.7" y="268.2" width="1.4" height="3.2" fill="#a8a4a8"/>
<rect x="1374.3" y="285.0" width="1.4" height="3.2" fill="#a8a4a8"/>
<rect x="1375.0" y="301.9" width="1.4" height="3.2" fill="#a8a4a8"/>
<polygon points="1378.2,248.1 1381.6,246.6 1384.3,312.4 1380.8,314.5" fill="#2c2e30" />
<rect x="1380.0" y="265.2" width="1.4" height="3.2" fill="#a8a4a8"/>
<rect x="1380.7" y="281.7" width="1.4" height="3.2" fill="#a8a4a8"/>
<rect x="1381.3" y="298.2" width="1.4" height="3.2" fill="#a8a4a8"/>
<polygon points="1384.4,245.4 1387.8,244.0 1390.8,308.5 1387.2,310.6" fill="#2c2e30" />
<rect x="1386.3" y="262.2" width="1.4" height="3.2" fill="#a8a4a8"/>
<rect x="1387.0" y="278.4" width="1.4" height="3.2" fill="#a8a4a8"/>
<rect x="1387.7" y="294.6" width="1.4" height="3.2" fill="#a8a4a8"/>
<polygon points="1390.6,242.8 1394.1,241.3 1397.2,304.6 1393.6,306.8" fill="#2c2e30" />
<rect x="1392.6" y="259.1" width="1.4" height="3.2" fill="#a8a4a8"/>
<rect x="1393.3" y="275.1" width="1.4" height="3.2" fill="#a8a4a8"/>
<rect x="1394.1" y="291.0" width="1.4" height="3.2" fill="#a8a4a8"/>
<polygon points="1396.9,240.1 1400.3,238.7 1403.6,300.7 1400.0,302.9" fill="#2c2e30" />
<rect x="1398.8" y="256.1" width="1.4" height="3.2" fill="#a8a4a8"/>
<rect x="1399.7" y="271.7" width="1.4" height="3.2" fill="#a8a4a8"/>
<rect x="1400.5" y="287.3" width="1.4" height="3.2" fill="#a8a4a8"/>
<polygon points="1403.1,237.5 1406.5,236.0 1410.0,296.9 1406.5,299.0" fill="#2c2e30" />
<rect x="1405.1" y="253.1" width="1.4" height="3.2" fill="#a8a4a8"/>
<rect x="1406.0" y="268.4" width="1.4" height="3.2" fill="#a8a4a8"/>
<rect x="1406.8" y="283.7" width="1.4" height="3.2" fill="#a8a4a8"/>
<polygon points="1409.3,234.8 1412.7,233.4 1416.4,293.0 1412.9,295.1" fill="#2c2e30" />
<rect x="1411.4" y="250.1" width="1.4" height="3.2" fill="#a8a4a8"/>
<rect x="1412.3" y="265.1" width="1.4" height="3.2" fill="#a8a4a8"/>
<rect x="1413.2" y="280.0" width="1.4" height="3.2" fill="#a8a4a8"/>
<line x1="1286" y1="334" x2="1422" y2="258" stroke="#e4e4e0" stroke-width="1.8"/>
<line x1="1309" y1="347" x2="1419" y2="275" stroke="#e4e4e0" stroke-width="1.8"/>
<line x1="1309" y1="271" x2="1309" y2="358" stroke="#7a3418" stroke-width="0.8"/>
<polygon points="1414.3,225.7 1423.7,237.6 1421.0,290.0 1418.0,292.0" fill="#a84a28" />
<polygon points="1414.3,225.7 1423.7,237.6 1420.0,238.0 1412.0,229.0" fill="#c0603a" />
<polygon points="1355.0,318.0 1372.0,310.0 1372.0,313.0 1355.0,321.0" fill="#2a2c2e" />
<polygon points="1102.0,246.0 1258.0,208.0 1353.0,215.0 1414.3,225.7 1308.4,270.8 1237.6,252.6 1237.6,282.7 1304.0,296.5 1286.0,306.0" fill="#8e8fa4" />
<rect x="1134.3" y="237.7" width="3.0" height="3.0" fill="#909090"/>
<rect x="1136.2" y="238.8" width="2.3" height="4.5" fill="#6e6e6e"/>
<rect x="1131.4" y="241.4" width="3.3" height="2.7" fill="#909090"/>
<rect x="1134.5" y="246.2" width="2.4" height="3.3" fill="#909090"/>
<rect x="1131.9" y="242.7" width="3.8" height="2.7" fill="#7a7a7a"/>
<rect x="1131.6" y="240.1" width="2.9" height="3.0" fill="#7a7a7a"/>
<rect x="1145.5" y="241.5" width="2.3" height="4.5" fill="#6e6e6e"/>
<rect x="1145.6" y="243.8" width="3.7" height="4.7" fill="#858585"/>
<rect x="1145.6" y="242.1" width="3.4" height="5.7" fill="#7a7a7a"/>
<rect x="1164.4" y="245.3" width="4.1" height="3.4" fill="#858585"/>
<rect x="1166.7" y="238.1" width="4.2" height="3.5" fill="#666666"/>
<rect x="1168.0" y="243.3" width="2.5" height="3.7" fill="#6e6e6e"/>
<rect x="1166.0" y="241.2" width="4.3" height="4.5" fill="#858585"/>
<rect x="1163.8" y="249.8" width="3.8" height="4.5" fill="#858585"/>
<rect x="1161.4" y="247.3" width="3.4" height="4.8" fill="#909090"/>
<rect x="1162.4" y="242.0" width="5.0" height="5.4" fill="#858585"/>
<rect x="1162.3" y="238.0" width="2.1" height="4.1" fill="#6e6e6e"/>
<rect x="1166.4" y="243.0" width="2.7" height="3.5" fill="#666666"/>
<rect x="1181.5" y="238.5" width="2.2" height="4.1" fill="#666666"/>
<rect x="1180.2" y="236.6" width="4.6" height="3.5" fill="#666666"/>
<rect x="1191.4" y="229.8" width="4.9" height="3.0" fill="#7a7a7a"/>
<rect x="1192.0" y="229.6" width="2.0" height="5.4" fill="#7a7a7a"/>
<rect x="1195.5" y="234.9" width="3.3" height="3.8" fill="#909090"/>
<rect x="1196.0" y="230.8" width="4.9" height="4.8" fill="#909090"/>
<rect x="1191.0" y="232.5" width="3.2" height="3.9" fill="#6e6e6e"/>
<rect x="1194.6" y="228.6" width="2.6" height="5.9" fill="#909090"/>
<rect x="1191.6" y="228.9" width="2.2" height="2.5" fill="#858585"/>
<rect x="1187.8" y="251.0" width="3.8" height="2.7" fill="#858585"/>
<rect x="1193.5" y="245.2" width="4.9" height="4.6" fill="#666666"/>
<rect x="1193.7" y="244.7" width="5.0" height="4.1" fill="#6e6e6e"/>
<rect x="1193.9" y="256.1" width="4.2" height="5.1" fill="#909090"/>
<rect x="1196.2" y="245.7" width="2.1" height="5.8" fill="#909090"/>
<rect x="1189.6" y="255.1" width="4.7" height="5.2" fill="#6e6e6e"/>
<rect x="1191.4" y="246.4" width="4.1" height="3.4" fill="#7a7a7a"/>
<rect x="1190.7" y="247.2" width="3.6" height="5.2" fill="#7a7a7a"/>
<rect x="1199.7" y="247.2" width="4.4" height="5.4" fill="#909090"/>
<rect x="1206.3" y="258.0" width="3.5" height="5.1" fill="#666666"/>
<rect x="1206.2" y="251.5" width="2.8" height="4.9" fill="#858585"/>
<rect x="1187.9" y="247.6" width="4.9" height="3.8" fill="#7a7a7a"/>
<rect x="1206.6" y="255.1" width="3.0" height="4.2" fill="#6e6e6e"/>
<rect x="1201.8" y="244.6" width="3.4" height="4.8" fill="#6e6e6e"/>
<rect x="1199.7" y="252.0" width="4.7" height="5.2" fill="#7a7a7a"/>
<rect x="1185.1" y="261.2" width="3.3" height="4.7" fill="#666666"/>
<rect x="1185.0" y="246.0" width="3.4" height="5.1" fill="#7a7a7a"/>
<rect x="1194.6" y="255.7" width="2.1" height="4.6" fill="#909090"/>
<rect x="1215.0" y="256.2" width="4.5" height="5.9" fill="#909090"/>
<rect x="1215.9" y="262.0" width="3.6" height="2.6" fill="#6e6e6e"/>
<rect x="1215.0" y="261.0" width="3.6" height="5.8" fill="#7a7a7a"/>
<rect x="1216.0" y="262.0" width="2.1" height="3.2" fill="#858585"/>
<rect x="1222.9" y="228.4" width="2.8" height="4.0" fill="#858585"/>
<rect x="1226.3" y="225.2" width="4.7" height="4.8" fill="#909090"/>
<rect x="1225.9" y="229.0" width="2.4" height="3.0" fill="#7a7a7a"/>
<rect x="1222.9" y="222.8" width="3.8" height="5.2" fill="#909090"/>
<rect x="1223.9" y="225.4" width="4.2" height="4.4" fill="#909090"/>
<rect x="1257.6" y="210.4" width="3.4" height="5.2" fill="#7a7a7a"/>
<rect x="1254.7" y="213.8" width="2.8" height="5.2" fill="#6e6e6e"/>
<rect x="1254.4" y="213.8" width="3.3" height="4.6" fill="#858585"/>
<rect x="1254.1" y="217.2" width="3.4" height="4.4" fill="#909090"/>
<rect x="1251.9" y="213.5" width="4.6" height="5.8" fill="#7a7a7a"/>
<rect x="1250.9" y="214.0" width="4.5" height="3.0" fill="#6e6e6e"/>
<rect x="1283.3" y="215.8" width="4.0" height="4.0" fill="#6e6e6e"/>
<rect x="1285.8" y="218.6" width="4.7" height="3.0" fill="#7a7a7a"/>
<rect x="1285.4" y="219.2" width="2.8" height="3.0" fill="#6e6e6e"/>
<rect x="1288.7" y="218.8" width="3.2" height="4.2" fill="#7a7a7a"/>
<rect x="1284.4" y="215.7" width="4.1" height="6.0" fill="#858585"/>
<rect x="1300.2" y="220.2" width="3.0" height="5.0" fill="#666666"/>
<rect x="1304.1" y="219.5" width="4.1" height="3.8" fill="#6e6e6e"/>
<rect x="1302.2" y="220.9" width="2.3" height="5.7" fill="#6e6e6e"/>
<rect x="1307.2" y="219.7" width="2.8" height="2.6" fill="#7a7a7a"/>
<rect x="1305.1" y="221.3" width="4.5" height="5.5" fill="#666666"/>
<rect x="1305.5" y="220.3" width="2.4" height="5.7" fill="#6e6e6e"/>
<rect x="1319.7" y="222.4" width="2.8" height="5.3" fill="#858585"/>
<rect x="1323.8" y="220.3" width="4.8" height="4.7" fill="#7a7a7a"/>
<rect x="1322.4" y="220.8" width="2.2" height="5.5" fill="#909090"/>
<rect x="1323.4" y="220.1" width="3.3" height="5.7" fill="#7a7a7a"/>
<rect x="1319.9" y="220.4" width="4.8" height="5.9" fill="#858585"/>
<rect x="1319.7" y="221.6" width="3.9" height="4.4" fill="#7a7a7a"/>
<rect x="1319.1" y="245.4" width="2.8" height="5.3" fill="#6e6e6e"/>
<rect x="1303.4" y="250.5" width="4.2" height="4.4" fill="#666666"/>
<rect x="1308.5" y="250.3" width="2.3" height="5.4" fill="#666666"/>
<rect x="1303.7" y="247.9" width="4.9" height="3.6" fill="#7a7a7a"/>
<rect x="1311.1" y="249.5" width="4.5" height="5.0" fill="#858585"/>
<rect x="1300.2" y="251.6" width="4.9" height="5.4" fill="#858585"/>
<rect x="1312.4" y="250.1" width="3.3" height="2.7" fill="#909090"/>
<rect x="1304.4" y="248.7" width="4.0" height="3.5" fill="#666666"/>
<rect x="1300.1" y="249.6" width="2.6" height="3.4" fill="#858585"/>
<rect x="1304.2" y="256.2" width="4.9" height="4.4" fill="#858585"/>
<rect x="1306.5" y="246.1" width="2.7" height="3.1" fill="#858585"/>
<rect x="1309.3" y="245.1" width="3.5" height="3.2" fill="#858585"/>
<rect x="1345.9" y="250.0" width="4.5" height="3.0" fill="#858585"/>
<rect x="1346.8" y="250.5" width="2.9" height="3.3" fill="#7a7a7a"/>
<rect x="1346.8" y="249.2" width="4.0" height="5.0" fill="#858585"/>
<rect x="1355.2" y="251.1" width="4.2" height="4.2" fill="#7a7a7a"/>
<rect x="1357.6" y="250.4" width="2.1" height="5.4" fill="#909090"/>
<rect x="1233.8" y="288.4" width="2.4" height="4.3" fill="#6e6e6e"/>
<rect x="1234.9" y="288.0" width="4.5" height="4.5" fill="#7a7a7a"/>
<rect x="1234.9" y="290.2" width="2.3" height="2.6" fill="#666666"/>
<rect x="1233.4" y="288.0" width="4.5" height="4.5" fill="#7a7a7a"/>
<rect x="1198.6" y="274.1" width="3.5" height="2.5" fill="#909090"/>
<rect x="1196.7" y="273.9" width="4.7" height="2.8" fill="#666666"/>
<rect x="1196.4" y="273.8" width="2.8" height="2.8" fill="#7a7a7a"/>
<rect x="1197.4" y="272.7" width="2.7" height="4.8" fill="#6e6e6e"/>
<rect x="1177.0" y="260.7" width="3.4" height="4.9" fill="#7a7a7a"/>
<rect x="1176.0" y="262.2" width="2.2" height="3.0" fill="#858585"/>
<polygon points="1237.6,252.6 1308.4,270.8 1309.0,298.0 1304.0,296.5 1237.6,282.7" fill="#b0502c" />
<line x1="1237.6" y1="262" x2="1308.4" y2="280" stroke="#8a3c1e" stroke-width="0.6"/>
<polygon points="1102.0,246.0 1258.0,208.0 1240.0,223.0 1110.0,248.0" fill="#c2603a" />
<polygon points="1276.0,241.0 1318.0,231.0 1332.0,228.0 1289.0,246.0" fill="#3a3a3e" />
<polygon points="1264.0,226.0 1318.0,216.5 1318.0,232.0 1276.0,241.0 1264.0,244.0" fill="#d3cbb3" />
<polygon points="1267.0,229.0 1270.0,228.4 1270.0,242.0 1267.0,243.0" fill="#2c2e30" />
<polygon points="1274.0,227.6 1277.0,227.0 1277.0,239.1 1274.0,240.1" fill="#2c2e30" />
<polygon points="1281.0,226.2 1284.0,225.6 1284.0,236.2 1281.0,237.2" fill="#2c2e30" />
<polygon points="1288.0,224.8 1291.0,224.2 1291.0,233.3 1288.0,234.3" fill="#2c2e30" />
<polygon points="1295.0,223.4 1298.0,222.8 1298.0,230.4 1295.0,231.4" fill="#2c2e30" />
<polygon points="1302.0,222.0 1305.0,221.4 1305.0,227.5 1302.0,228.5" fill="#2c2e30" />
<polygon points="1309.0,220.6 1312.0,220.0 1312.0,224.6 1309.0,225.6" fill="#2c2e30" />
<polygon points="1205.0,244.0 1228.0,237.0 1245.0,233.0 1245.0,255.0 1215.0,258.0" fill="#d3cbb3" />
<polygon points="1210.0,243.0 1213.0,242.2 1213.0,253.0 1210.0,254.0" fill="#2c2e30" />
<polygon points="1217.0,241.0 1220.0,240.2 1220.0,251.0 1217.0,252.0" fill="#2c2e30" />
<polygon points="1224.0,239.0 1227.0,238.2 1227.0,249.0 1224.0,250.0" fill="#2c2e30" />
<polygon points="1231.0,237.0 1234.0,236.2 1234.0,247.0 1231.0,248.0" fill="#2c2e30" />
<polygon points="1238.0,235.0 1241.0,234.2 1241.0,245.0 1238.0,246.0" fill="#2c2e30" />
<polygon points="1205.0,250.0 1237.0,247.0 1237.0,260.0 1214.0,258.0" fill="#cdc4a6" />
<polygon points="1228.0,220.0 1256.0,217.0 1263.0,223.0 1263.0,249.5 1228.0,251.0" fill="#b4522e" />
<polygon points="1228.0,220.0 1256.0,217.0 1263.0,223.0 1236.0,226.0" fill="#a04628" />
<polygon points="1254.0,228.0 1261.0,226.0 1261.0,246.0 1254.0,247.0" fill="#2c2e30" />
<polygon points="1255.0,232.0 1260.0,231.0 1260.0,236.0 1255.0,237.0" fill="#c4a8a8" />
<polyline points="1102,246 1258,208 1331,221 1335,222 1353,215 1414.3,225.7" fill="none" stroke="#b24f2b" stroke-width="3.2" stroke-linejoin="round"/>
<polyline points="1102,246 1286,306 1304,296.5" fill="none" stroke="#a24628" stroke-width="2"/>
<polyline points="1237.6,252.6 1276.5,242 1289,247 1345.4,225.7" fill="none" stroke="#b24f2b" stroke-width="3.5" stroke-linejoin="round"/>
<polyline points="1237.6,252.6 1308.4,270.8 1414.3,225.7" fill="none" stroke="#9c4426" stroke-width="2"/>
<rect x="1356" y="322" width="6" height="7" fill="#2a9a9a"/></g>
<!-- REST -->
<g fill="none" stroke="#e8e8e8" stroke-width="1.5">
<path d="M674.5 51V45.8h5.8M686.2 45.8h5.8V51M692 57v5.7h-5.8M680.3 62.7h-5.8V57"/>
</g>
<polygon points="682.9,49.2 687,51.6 687,56.4 682.9,58.8 678.8,56.4 678.8,51.6" fill="#dedede"/>
<g stroke="#5a5a5a" stroke-width="1" stroke-linejoin="round">
<polygon points="1763.8,87 1802,82.2 1843,86 1806.5,94" fill="#fafafa"/>
<polygon points="1763.8,87 1806.5,94 1806.5,158.5 1768.5,136" fill="#ffffff"/>
<polygon points="1806.5,94 1843,86 1838,135 1806.5,158.5" fill="#ffffff"/>
</g>
<text x="0" y="0" font-family="Liberation Sans" font-size="11" fill="#8a8a8a" transform="matrix(0.63,0.28,0,1.65,1773,123)">Справа</text>
<text x="0" y="0" font-family="Liberation Sans" font-size="11" fill="#8a8a8a" transform="matrix(0.575,-0.39,0,1.9,1816.5,131)">Сзади</text>
<circle cx="717.2" cy="393.5" r="46.2" fill="#a3a3a3"/>
<path d="M717 390V372" stroke="#1010e0" stroke-width="2.2"/>
<polygon points="717,365 714.2,375 719.8,375" fill="#1010e0"/>
<text x="714.5" y="360.5" font-family="Liberation Sans" font-weight="bold" font-size="10.5" fill="#1818d0">Z</text>
<path d="M714 395.5L701 400.5" stroke="#e01010" stroke-width="2"/>
<polygon points="696,402.5 703,397.2 704.5,401.5" fill="#e01010"/>
<text x="688" y="405" font-family="Liberation Sans" font-weight="bold" font-size="10.5" fill="#e01010">X</text>
<path d="M720 395.5L734 399" stroke="#10d010" stroke-width="2"/>
<polygon points="741,401 733,396 732,401.5" fill="#10d010"/>
<text x="746" y="403.5" font-family="Liberation Sans" font-weight="bold" font-size="10.5" fill="#10d010">Y</text>
<circle cx="717.5" cy="394" r="3.3" fill="#c8c8c8"/>
<defs><filter id="blr" x="-20%" y="-50%" width="140%" height="200%"><feGaussianBlur stdDeviation="2"/></filter></defs><g opacity="0.5" filter="url(#blr)"><path d="M263 261L166 284" stroke="#000" stroke-width="3.5" stroke-linecap="round"/><polygon points="151,286 164,276 168,291" fill="#000"/></g>
<path d="M259.5 256.5L158 278.5" stroke="#c80000" stroke-width="3.2" stroke-linecap="round"/>
<polygon points="147.8,281.3 160.4,271.3 163.8,286" fill="#c80000"/>
<rect x="652" y="470" width="2" height="27" fill="#3a98bd"/>
<rect x="1245" y="509" width="48" height="3" fill="#3a94b5"/>
<polygon points="627,102.8 637.2,102.8 632.1,108.2" fill="#e6e6e6"/>
<polygon points="627,873.5 637.2,873.5 632.1,867.5" fill="#e6e6e6"/>
<polygon points="650.5,11 660.5,11 655.5,16.5" fill="#bdbdbd"/>
<rect x="627" y="159" width="8" height="2.2" fill="#fff"/>
<g fill="none" stroke="#e6e6e6" stroke-width="1.6" stroke-linejoin="round" stroke-linecap="round">
<path d="M1709.5 522.5v-3.2c0-0.6-0.4-1-1-1h-6.7c-0.6 0-1 0.4-1 1v6.8c0 0.6 0.4 1 1 1h3"/>
<rect x="1705.3" y="522.5" width="13" height="12.6" rx="1.2"/>
<path d="M1706 526.2h2.5c0.6 0 1 0.4 1 1v3.4" stroke-width="1.4"/>
</g>
<g fill="#e6e6e6">
<rect x="1738" y="519.5" width="14" height="1.8"/><rect x="1738" y="535.2" width="14" height="1.8"/>
<rect x="1744.2" y="523" width="1.6" height="10.5"/>
<polygon points="1745,521.8 1741.8,525.5 1748.2,525.5"/><polygon points="1745,534.8 1741.8,531 1748.2,531"/>
<rect x="1772" y="526.5" width="14" height="3.2"/>
<rect x="1778.2" y="519" width="1.6" height="5"/><polygon points="1779,525.5 1775.8,522 1782.2,522"/>
<rect x="1778.2" y="531.5" width="1.6" height="5.5"/><polygon points="1779,530.6 1775.8,534 1782.2,534"/>
<polygon points="1821.18,526.61 1821.18,530.39 1818.75,530.82 1818.71,530.92 1820.12,532.95 1817.45,535.62 1815.42,534.21 1815.32,534.25 1814.89,536.68 1811.11,536.68 1810.68,534.25 1810.58,534.21 1808.55,535.62 1805.88,532.95 1807.29,530.92 1807.25,530.82 1804.82,530.39 1804.82,526.61 1807.25,526.18 1807.29,526.08 1805.88,524.05 1808.55,521.38 1810.58,522.79 1810.68,522.75 1811.11,520.32 1814.89,520.32 1815.32,522.75 1815.42,522.79 1817.45,521.38 1820.12,524.05 1818.71,526.08 1818.75,526.18"/>
</g>
<circle cx="1813" cy="528.5" r="2.6" fill="#535353"/>
<path d="M1842 526l4.8 4.8l4.8-4.8" fill="none" stroke="#e6e6e6" stroke-width="1.8"/>
<g fill="none" stroke="#e0e0e0" stroke-width="1.3" stroke-linecap="round" stroke-linejoin="round">
<path d="M1893.5 67.3h-3.5a4.3 4.3 0 0 1-1-8.4a5.5 5.5 0 0 1 4.5-4.8a6 6 0 0 1 10.5 1.5a5 5 0 0 1 2.5 9.2c-0.6 1.6-2 2.5-4 2.5h-2"/>
<path d="M1897.3 56.5V73.5M1893 61.5l4.3 3M1897.3 64l3.5-3M1897.3 60l2-1.8"/>
<path d="M1892.5 110.5h-8V93.5h23v7" />
<path d="M1892.5 110.5v2.5h-2.5"/>
<path d="M1894.5 106.5v-4h4M1904.5 102.5h4v4M1908.5 114v4h-4M1898.5 118h-4v-4"/>
<rect x="1887.3" y="151.5" width="19.3" height="6.2" stroke-width="1.2"/>
<path d="M1887 159.8h20" stroke-width="1.2"/>
<path d="M1890 157.5v-2M1893 157.5v-2M1896 157.5v-2M1899 157.5v-2M1902 157.5v-2M1905 157.5v-2" stroke-width="0.9"/>
<path d="M1883.5 201.7l8-6.3h19l-8 6.3z" stroke-width="1.2"/>
<path d="M1885 237h17.5v17h-17.5zM1885 237l6-5.3h18v17l-6.5 5.3M1902.5 237l6.5-5.3" stroke-width="1.2"/>
<path d="M1885 254l6-5.3h18M1891 231.7v17" stroke-width="0.8"/>
<path d="M1887 276h22v20.5h-25V279z" stroke-width="1.3"/>
<path d="M1884 286h25M1897 276v20.5" stroke-width="1" stroke-dasharray="2 1.2"/>
<path d="M1902 296.5v-3h7" stroke-width="1.1"/>
<path d="M1885.5 298h24.5v-20" stroke-width="1.2"/>
<circle cx="1896.7" cy="330.7" r="8" stroke-width="1.6"/>
<path d="M1896.7 320.5v2M1896.7 338.9v2M1886.5 330.7h2M1904.9 330.7h2" stroke-width="1.6"/>
<circle cx="1896.7" cy="374.7" r="12.6" stroke-width="1.1"/>
<path d="M1891.5 383.5V367.2c2-1 4-1 6 0s4 1 6 0v7.5c-2 1-4 1-6 0s-4-1-6 0" stroke-width="1.1"/>
<path d="M1884 427.8L1911 412.1M1884 436.4L1911 421.3M1885.2 422.6L1901.6 432.6M1893.2 417.3L1909.6 426.6" stroke-width="1"/>
<rect x="1885" y="461.3" width="24" height="23" stroke-width="1.1" stroke-dasharray="2 1.5"/>
<rect x="1885" y="505.3" width="24" height="23" stroke-width="1.1" stroke-dasharray="2 1.5"/>
<rect x="1885.2" y="549" width="23.8" height="23.2" stroke-width="1.1" stroke-dasharray="2 1.5"/>
<rect x="1885.2" y="593" width="23.8" height="23.5" stroke-width="1.1" stroke-dasharray="2 1.5"/>
<path d="M1896.7 466.5l5.3 3v6.5l-5.3 3l-5.3-3v-6.5zM1891.4 469.5l5.3 3l5.3-3M1896.7 472.5v6.5" stroke-width="1"/>
</g>
<g fill="#e0e0e0">
<text x="1884" y="422.5" font-family="Liberation Sans" font-size="6">1</text>
<text x="1893" y="416" font-family="Liberation Sans" font-size="6">2</text>
<polygon points="1883,165 1883,169.5 1887.5,169.5"/><polygon points="1902,106.5 1906,108.8 1906,113.4 1902,115.7 1898,113.4 1898,108.8"/>
<polygon points="1892,194 1902,184.8 1902,204 1892,212.9"/>
<polygon points="1893,237.5 1897,233 1897,251 1893,254"/>
<polygon points="1884,279 1887,276 1887,279"/>
<circle cx="1896.7" cy="330.7" r="4"/>
<path d="M1888.5 516.8c2.2-3.3 5-5 8.2-5s6 1.7 8.2 5c-2.2 3.3-5 5-8.2 5s-6-1.7-8.2-5z"/>
<path d="M1888.5 560.5c2.2-3.3 5-5 8.2-5s6 1.7 8.2 5c-2.2 3.3-5 5-8.2 5s-6-1.7-8.2-5z"/>
<rect x="1895" y="603.2" width="16" height="15.5"/>
</g>
<circle cx="1896.7" cy="516.8" r="2.6" fill="#535353"/>
<circle cx="1896.7" cy="560.5" r="2.6" fill="#535353"/>
<path d="M1889.5 553l13.5 13" stroke="#535353" stroke-width="2.2"/>
<path d="M1890 552.5l13.5 13.5" stroke="#e0e0e0" stroke-width="1.1"/>
<path d="M1899 607l8 8M1907 607l-8 8" stroke="#535353" stroke-width="1.2"/>
<polygon points="1887,647 1897,644 1907,647 1906,662 1897,666 1889,662" fill="#8e8e8e"/>
<path d="M1887 647.5l10 3l9.5-3.2l-0.5 14l-9 4.5l-8-4.5z" fill="#dedede"/>
<path d="M1897 650.5v15l9-4.5l0.5-13.8z" fill="#8a8a8a"/>
<path d="M1887 647.3l10-3.3l9.5 3.2l-9.5 3.2z" fill="#bdbdbd"/>
<g fill="none" stroke="#e8e8e8" stroke-width="1.8"><ellipse cx="1897" cy="698" rx="10.5" ry="5"/><ellipse cx="1897" cy="698" rx="5" ry="10"/></g>
<path d="M1893.5 701l3.5-3.5l3.5 3.5M1897 697.5v-3" fill="none" stroke="#e8e8e8" stroke-width="0.9"/>
<!-- panel icons -->
<g fill="#f0f0f0">
 <rect x="70" y="59.2" width="13" height="1.8"/>
 <rect x="70" y="63.2" width="13" height="1.8"/>
 <rect x="70" y="67.2" width="9" height="1.8"/>
 <path d="M81 66.5l4.5 3.2l-4.5 3.2z"/>
 <rect x="682" y="521.2" width="13" height="1.8"/>
 <rect x="682" y="525.2" width="13" height="1.8"/>
 <rect x="682" y="529.2" width="9" height="1.8"/>
 <path d="M693 528.5l4.5 3.2l-4.5 3.2z"/>
</g>
<g fill="none" stroke="#3e98c0" stroke-width="1.3" stroke-linecap="round" stroke-linejoin="round">
 <path d="M73.5 135.5l2.5-2.5l2.5 2.5M73.5 141l2.5 2.5l2.5-2.5"/>
 <path d="M617.1 138.2l3.3 3.6M621.1 138.2l2.9 3.6l7.6-7.6M623.3 137.6l4.3-3.3" stroke-width="1.5" stroke="#2b93c3"/>
</g>
<path d="M623.5 60l13 12.5M636.5 60l-13 12.5" stroke="#f2f2f2" stroke-width="2"/>
<!-- SIDEBAR ICONS -->
<g fill="none" stroke="#e2e2e2" stroke-width="1.7" stroke-linecap="round" stroke-linejoin="round">
 <!-- tree -->
 <path d="M22 49.5h2.5c1.3 0 2 0.7 2 2V74h5M26.5 54h5M26.5 64h5"/>
 <!-- branch -->
 <path d="M22 104v14.5M22 104c2 4 5 8 9.8 11"/>
 <!-- shuffle -->
 <path d="M13.3 152C20 152 22.5 155 26.4 161S33 169.3 42.7 169.3M13.3 169.3C20 169.3 22.5 166.5 26.4 161S33 152.2 42.7 152.2" stroke-width="1.7"/>
 <path d="M34.4 146.7Q38 149.5 42.7 152.2Q38 154 34.4 158M34.4 163.8Q38 166.5 42.7 169.3Q38 171.5 34.4 175.1" stroke-width="1.7"/>
 <!-- sigma -->
 <path d="M33 201h-14l8 10l-8 10.5h14" stroke-width="2.4"/>
 <!-- sigma plus -->
 <path d="M25 252h-10l6 9.5l-6 10h10" stroke-width="2.2"/>
 <path d="M31.5 262h9M36 257.5v9" stroke-width="1.8"/>
 <!-- 2D doc -->
 <path d="M15.2 298l23.3 0.6c-1.8 5-2.4 12-2.5 26H15.2z" stroke-width="2.2"/>
 <!-- hierarchy -->
 <rect x="23.3" y="347" width="7.5" height="10.2" rx="0.8" stroke-width="1.4"/>
 <path d="M27 357.2v9.6M15 362h24M15 362v4.8M39 362v4.8" stroke-width="1.4"/>
 <rect x="11.3" y="366.8" width="7.5" height="10.8" rx="0.8" stroke-width="1.4"/>
 <rect x="23.3" y="366.8" width="7.5" height="10.8" rx="0.8" stroke-width="1.4"/>
 <rect x="35.2" y="366.8" width="7.5" height="10.8" rx="0.8" stroke-width="1.4"/>
 <!-- zigzags -->
 <path d="M15.5 404.5c2-2.5 4-4 6-4s3.5 5 6 5.5c2.5 0.5 6-3 12-9"/>
 <path d="M15.5 412.5c1.5-1.5 3-2.5 4.5-2.5c2 0 3.5 4.5 5.5 5c2.5 0.5 6-3 13-4"/>
 <path d="M15.5 423.6h24"/>
 <!-- puzzle -->
 <path d="M14.5 452.5H22.9A3.2 3.2 0 1 1 29.1 452.5H36.8V459.8A3.2 3.2 0 1 1 36.8 466.2V474.2H29.2A3 3 0 0 0 23.2 474.2H14.5V466.2A3 3 0 0 0 14.5 460.2Z" stroke-width="1.6"/>
 <!-- user check -->
 <circle cx="26.2" cy="504" r="5.6" stroke-width="1.6"/>
 <path d="M14.8 521.5c0-5 5-8.5 11.4-8.5c4 0 7.5 1.5 9.5 4M14.8 521.5h9" stroke-width="1.6"/>
 <path d="M30.5 521.5l4 4.5l7.5-8.5" stroke-width="2.3"/>
 <!-- folder back -->
 <path d="M12 553l5.5-0.5l5 2.5l10 0.5l4 5.5l5.5 2l-4.5 10l-19 0.5c-3-4-5.5-10-6.5-20.5z" stroke-width="1.5"/>
 <path d="M35 566.5h-11.5M28 562.5l-4.5 4l4.5 4" stroke-width="1.6"/>
 <!-- user pin -->
 <circle cx="21.9" cy="603.5" r="5" stroke-width="1.6"/>
 <path d="M11.5 619c0-5 4.5-8 10.4-8c2.5 0 5 0.6 6.5 1.8M11.5 619h17" stroke-width="1.6"/>
 <path d="M35.4 625.5c-3-3-5.8-6-5.8-9a5.8 5.8 0 0 1 11.6 0c0 3-2.8 6-5.8 9z" stroke-width="1.6"/>
 <!-- gauge -->
 <circle cx="26.5" cy="657.5" r="13.5" stroke-width="1.7"/>
 <path d="M26.5 671v5M12.2 677h29.7" stroke-width="1.7"/>
 <path d="M17 654a10 10 0 0 1 19 0" stroke-width="0.9" stroke-dasharray="1.2 2"/>
</g>
<g fill="#e2e2e2">
 <rect x="11" y="47" width="11.3" height="6" rx="3"/>
 <rect x="34" y="52" width="9" height="4.2" rx="2.1"/>
 <rect x="34" y="62" width="9" height="4.2" rx="2.1"/>
 <rect x="34" y="72" width="9" height="4.2" rx="2.1"/>
 <circle cx="22" cy="104" r="3"/>
 <circle cx="22" cy="118.5" r="3"/>
 <circle cx="31.8" cy="115.2" r="3"/>
 <text x="25.5" y="315.3" font-family="Liberation Sans" font-size="11" text-anchor="middle" fill="#e2e2e2">2D</text>
 <path d="M27 324l1.5-2.5h7.3l-0.3 2.5z"/>
 <circle cx="35.4" cy="616" r="1.6"/>
 <path d="M25 667.5l3-14l1.5 14.5z"/>
</g>

<g fill="#535353">
 <circle cx="1891" cy="11.2" r="2.8"/>
 <path d="M1885.5 19.8c0.3-2.5 2.6-3.7 5.5-3.7s5.2 1.2 5.5 3.7z"/>
</g>
</svg>

<!-- bottom strip -->
<div class="a" style="left:0;top:899px;width:1915px;height:2px;background:#2a2826"></div><div class="a" style="left:43px;top:899px;width:288px;height:2px;background:#fafafa"></div><div class="a" style="left:528px;top:899px;width:49px;height:2px;background:#8a8a8a"></div>
</body></html>
